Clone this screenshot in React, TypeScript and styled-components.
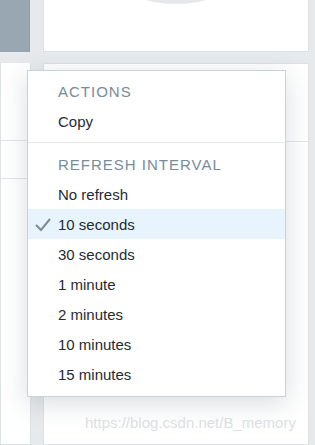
import React, { useState } from "react";
import styled, { createGlobalStyle } from "styled-components";

const GlobalStyle = createGlobalStyle`
  html, body {
    margin: 0;
    padding: 0;
    background: #e7eaec;
    font-family: "Liberation Sans", Arial, sans-serif;
  }
`;

const intervals = [
  "No refresh",
  "10 seconds",
  "30 seconds",
  "1 minute",
  "2 minutes",
  "10 minutes",
  "15 minutes",
];

export const App = () => {
  const [selected, setSelected] = useState("10 seconds");

  return (
    <PageStyled>
      <GlobalStyle />
      <SideBlockStyled />
      <PanelStyled>
        <ArcStyled>
          <svg width="60" height="5" viewBox="0 0 60 5">
            <path d="M0 0 Q30 8 60 0 Z" fill="#e6e7e8" />
          </svg>
        </ArcStyled>
      </PanelStyled>
      <PanelStyled>
        <PanelHeadStyled />
        <PanelRowStyled />
      </PanelStyled>
      <PanelStyled>
        <PanelHeadStyled />
      </PanelStyled>

      <MenuStyled>
        <MenuHeaderStyled>Actions</MenuHeaderStyled>
        <MenuItemStyled>Copy</MenuItemStyled>
        <SeparatorStyled />
        <MenuHeaderStyled>Refresh interval</MenuHeaderStyled>
        {intervals.map((label) => (
          <MenuItemStyled
            key={label}
            $active={label === selected}
            onClick={() => setSelected(label)}
          >
            {label === selected && (
              <CheckStyled width="16" height="14" viewBox="0 0 16 14">
                <polyline
                  points="1,7 6,12 15,1"
                  fill="none"
                  stroke="#7d8b95"
                  strokeWidth="2"
                />
              </CheckStyled>
            )}
            {label}
          </MenuItemStyled>
        ))}
      </MenuStyled>

      <WatermarkStyled>https://blog.csdn.net/B_memory</WatermarkStyled>
    </PageStyled>
  );
};

export default App;

const PageStyled = styled.div`
  position: relative;
  display: grid;
  grid-template-columns: 31px 266px;
  grid-template-rows: 52px 382px;
  column-gap: 12px;
  row-gap: 11px;
  width: 315px;
  height: 445px;
  overflow: hidden;
`;

const SideBlockStyled = styled.div`
  background: #98a7b1;
  border-right: 1px solid #8d9ca6;
  margin-right: 1px;
`;

const PanelStyled = styled.div`
  background: #fff;
  border: 1px solid #dce1e4;
  border-top: none;
  display: flex;
  flex-direction: column;

  & + & + & {
    border-top: 1px solid #dce1e4;
  }
`;

const ArcStyled = styled.div`
  display: flex;
  justify-content: center;
  line-height: 0;
`;

const PanelHeadStyled = styled.div`
  height: 77px;
  border-bottom: 1px solid #e3e7e9;
`;

const PanelRowStyled = styled.div`
  height: 37px;
  border-bottom: 1px solid #e3e7e9;
`;

const MenuStyled = styled.div`
  position: absolute;
  left: 27px;
  top: 70px;
  width: 259px;
  box-sizing: border-box;
  padding: 5px 0 7px;
  background: #fff;
  border: 1px solid #c9d2d7;
  box-shadow: 0 6px 24px rgba(40, 60, 75, 0.18);
`;

const MenuHeaderStyled = styled.div`
  height: 30px;
  line-height: 32px;
  padding-left: 30px;
  font-size: 15px;
  letter-spacing: 1px;
  text-transform: uppercase;
  color: #778c9a;
`;

const MenuItemStyled = styled.div<{ $active?: boolean }>`
  position: relative;
  height: 30px;
  line-height: 32px;
  padding-left: 30px;
  font-size: 15px;
  color: #1f2b33;
  background: ${(p) => (p.$active ? "#e8f4fd" : "transparent")};
  cursor: pointer;
`;

const CheckStyled = styled.svg`
  position: absolute;
  left: 7px;
  top: 9px;
`;

const SeparatorStyled = styled.div`
  height: 1px;
  margin: 6px 0;
  background: #e5e8ea;
`;

const WatermarkStyled = styled.div`
  position: absolute;
  left: 85px;
  top: 414px;
  font-size: 15px;
  color: #dbdfe2;
  white-space: nowrap;
`;
